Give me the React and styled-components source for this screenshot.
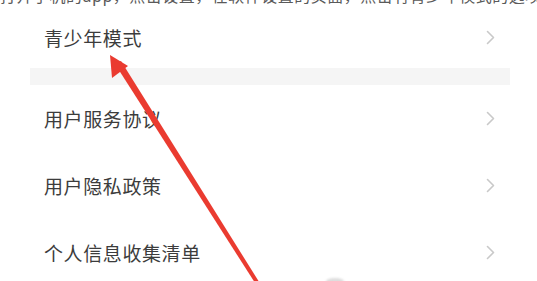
import React from 'react';
import styled, { createGlobalStyle } from 'styled-components';

const GlobalStyle = createGlobalStyle`
  html, body {
    margin: 0;
    padding: 0;
    background: #fff;
  }
  body {
    font-family: "Noto Sans CJK SC", "Noto Sans", sans-serif;
  }
`;

const Page = styled.div`
  position: relative;
  width: 537px;
  height: 281px;
  overflow: hidden;
  background: #fff;
`;

/* the previous line of the article, only its lower edge is visible */
const Caption = styled.div`
  margin-top: -16px;
  height: 23px;
  line-height: 22px;
  font-size: 16px;
  color: #5a5a5a;
  white-space: nowrap;
  letter-spacing: 0.5px;
`;

const Panel = styled.div`
  margin: 0 27px 0 30px;
`;

const Row = styled.div`
  display: flex;
  align-items: center;
  justify-content: space-between;
  height: ${p => p.$h || 67}px;
  padding: 0 15px 0 14px;
  box-sizing: border-box;
`;

const Label = styled.span`
  font-size: 19px;
  color: #3c3c3c;
  letter-spacing: 0.6px;
`;

const Chevron = styled.svg`
  width: 9px;
  height: 15px;
  flex: none;
`;

const Band = styled.div`
  height: 17px;
  background: #f5f5f5;
`;

const Arrow = styled.svg`
  position: absolute;
  left: 0;
  top: 0;
  pointer-events: none;
`;

const Smudge = styled.div`
  position: absolute;
  left: 326px;
  top: 278px;
  width: 18px;
  height: 6px;
  border-radius: 50%;
  background: #ddd;
  filter: blur(1px);
`;

function Arrowhead() {
  return (
    <Arrow width="537" height="281" viewBox="0 0 537 281">
      <polygon points="115,64 121,61 261,285 257,286" fill="#ea3b30" />
      <polygon points="110,55 128,66 112,78" fill="#ea3b30" />
    </Arrow>
  );
}

function Arr() {
  return (
    <Chevron viewBox="0 0 9 15">
      <path d="M1.5 1.5 L7.5 7.5 L1.5 13.5" fill="none" stroke="#c9c9c9" strokeWidth="1.6" strokeLinecap="round" strokeLinejoin="round" />
    </Chevron>
  );
}

const items = ['用户服务协议', '用户隐私政策', '个人信息收集清单'];

export default function App() {
  return (
    <>
      <GlobalStyle />
      <Page>
        <Caption>打开手机的app，点击设置，在软件设置的页面，点击有青少年模式的选项，点击</Caption>
        <Panel>
          <Row $h={61}>
            <Label>青少年模式</Label>
            <Arr />
          </Row>
          <Band />
          {items.map(t => (
            <Row key={t}>
              <Label>{t}</Label>
              <Arr />
            </Row>
          ))}
        </Panel>
        <Arrowhead />
        <Smudge />
      </Page>
    </>
  );
}
